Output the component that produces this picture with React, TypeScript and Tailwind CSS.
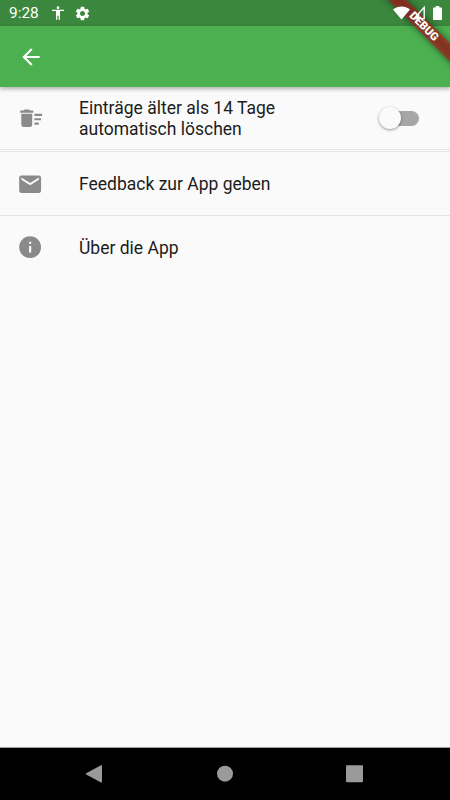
import type { ReactNode } from "react";
import { MdAccessibility, MdArrowBack, MdDeleteSweep, MdEmail, MdInfo, MdSettings } from "react-icons/md";

function StatusBar() {
  return (
    <div className="flex h-[26px] items-center bg-[#3b873e] pl-[9px] pr-[8px] text-white">
      <span className="w-[41px] pt-[2px] text-[15.4px] leading-none">9:28</span>
      <MdAccessibility className="h-[16px] w-[16px]" />
      <MdSettings className="ml-[8px] h-[17px] w-[17px]" />
      <div className="relative z-20 ml-auto flex items-center">
        <svg className="h-[14px] w-[17px]" viewBox="0 0 17 14">
          <path d="M0 3.6C5 -0.6 12 -0.6 17 3.6L8.5 13.6z" fill="#fff" />
        </svg>
        <svg className="ml-[2px] h-[14px] w-[13px]" viewBox="0 0 13 14">
          <path d="M12.2 1.4V12.6H2.2z" fill="none" stroke="#fff" strokeWidth="1.4" />
          <path d="M7.3 7V13.3H1z" fill="#fff" />
        </svg>
        <svg className="ml-[8px] h-[14px] w-[9px]" viewBox="0 0 9 14">
          <path d="M2.7 0h3.6v1.4H8.2a.8.8 0 0 1 .8.8v11a.8.8 0 0 1-.8.8H.8a.8.8 0 0 1-.8-.8v-11a.8.8 0 0 1 .8-.8h1.9z" fill="#fff" />
        </svg>
      </div>
    </div>
  );
}

function DebugBanner() {
  return (
    <div className="pointer-events-none absolute right-0 top-0 z-10 h-[80px] w-[80px] overflow-hidden">
      {/* the shadow also shows through the translucent ribbon */}
      <div className="absolute left-[-6.5px] top-[20px] h-[13px] w-[120px] rotate-45 bg-black/50 blur-[3.5px]" />
      <div className="absolute left-[-6.5px] top-[20px] flex h-[13px] w-[120px] rotate-45 items-center justify-center bg-[#b71c1c]/63 text-[11.2px] font-black leading-none text-white">
        DEBUG
      </div>
    </div>
  );
}

function Tile({ icon, children, trailing, className }: { icon: ReactNode; children: ReactNode; trailing?: ReactNode; className: string }) {
  return (
    <div className={`flex items-center pl-[17px] pr-[30px] ${className}`}>
      <span className="w-[62px] text-[26.25px] text-[#8a8a8a]">{icon}</span>
      <span className="flex-1 pt-[2px] text-[17.5px] leading-[21px] text-[#1c1c1c]">{children}</span>
      {trailing}
    </div>
  );
}

function Switch() {
  return (
    <div className="flex h-[22px] w-[41px] items-center">
      <div className="z-[1] h-[22px] w-[22px] shrink-0 rounded-full bg-[#fafafa] shadow-[0_1px_3px_rgba(0,0,0,0.4)]" />
      <div className="-ml-[18px] h-[15px] w-[36px] rounded-full bg-[#a6a6a6]" />
    </div>
  );
}

export default function App() {
  return (
    <div className="relative flex h-[800px] w-[450px] flex-col overflow-hidden bg-[#fafafa] font-[Roboto,sans-serif]">
      <StatusBar />
      <header className="flex h-[61px] items-center bg-[#4caf50] pl-[18px] text-white shadow-[0_2px_4px_rgba(0,0,0,0.3)]">
        <MdArrowBack className="h-[26px] w-[26px]" />
      </header>
      <DebugBanner />

      <main className="flex-1">
        <Tile className="h-[62px]" icon={<MdDeleteSweep className="ml-[0.5px]" />} trailing={<Switch />}>
          Einträge älter als 14 Tage
          <br />
          automatisch löschen
        </Tile>
        <div className="h-[3px] border-y border-[#e6e6e6]" />
        <Tile className="h-[63px]" icon={<MdEmail className="mt-px" />}>
          Feedback zur App geben
        </Tile>
        <div className="h-px bg-[#e4e4e4]" />
        <Tile className="h-[63px]" icon={<MdInfo />}>
          Über die App
        </Tile>
      </main>

      <nav className="h-[53px] border-t border-[#a0a0a0] bg-black">
        <svg className="h-[52px] w-[450px]" viewBox="0 748 450 52" fill="#9a9a9a">
          <path d="M86.2 773.2L101 765.2Q102 764.8 102 766V781.8Q102 783 101 782.4L86.2 774.4Q85.4 773.8 86.2 773.2z" />
          <circle cx="225" cy="773.7" r="8" />
          <rect x="346" y="765.3" width="17" height="17" rx="1" />
        </svg>
      </nav>
    </div>
  );
}
